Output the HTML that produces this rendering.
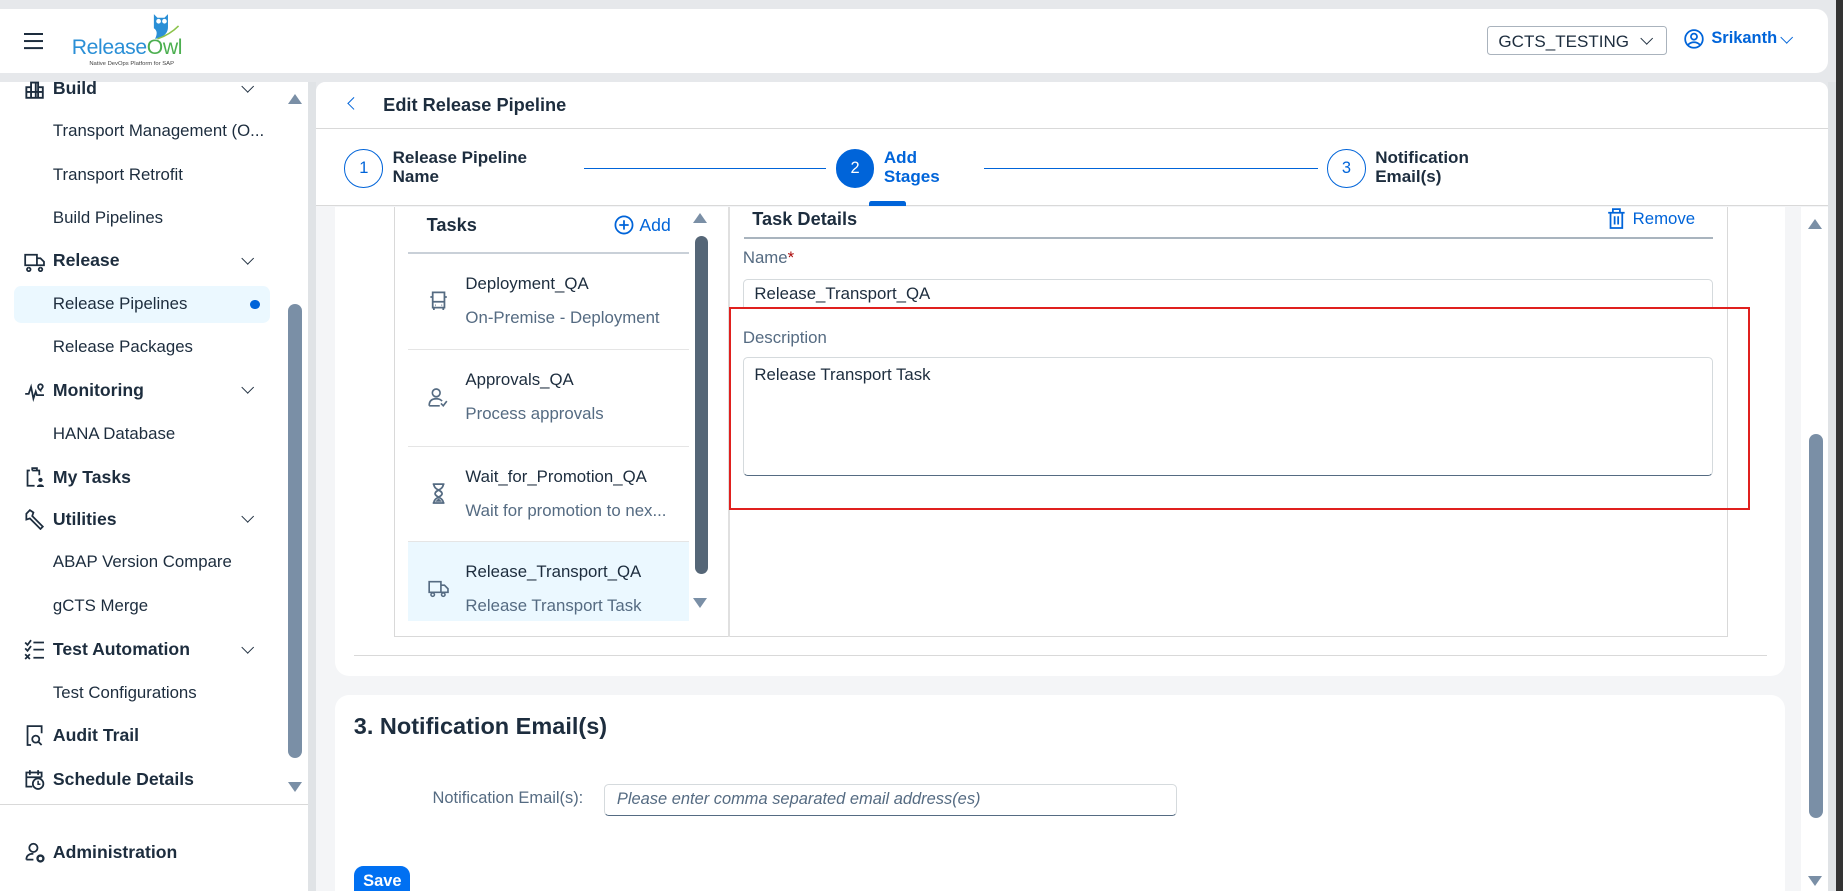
<!DOCTYPE html>
<html><head><meta charset="utf-8">
<style>
*{box-sizing:border-box;margin:0;padding:0}
html,body{width:1843px;height:891px;overflow:hidden}
body{background:#e6e8eb;font-family:"Liberation Sans",sans-serif;color:#1d2d3e}
#w{zoom:1.17538;width:1568px;height:758px;position:relative;overflow:hidden}
.a{position:absolute}
.hdr{left:0;top:8px;width:1555px;height:54px;background:#fff;border-radius:0 10px 10px 0}
.dark{left:1562px;top:0;width:6px;height:758px;background:#333}
.side{left:0;top:70px;width:262px;height:688px;background:#fff}
.nav{position:absolute;left:20px;font-size:15px;font-weight:bold;color:#1d2d3e}
.sub{position:absolute;left:45px;font-size:14.3px;color:#1d2d3e}
.chev{position:absolute;left:207px;width:8px;height:8px;border-right:1.6px solid #1d2d3e;border-bottom:1.6px solid #1d2d3e;transform:rotate(45deg)}
.ic{position:absolute;left:20px;width:18px;height:18px}
.main{left:269px;top:70px;width:1286px;height:688px;background:#f4f5f7;border-radius:8px 8px 0 0}
.card{background:#fff;position:absolute}
.tri-up{width:0;height:0;border-left:6px solid transparent;border-right:6px solid transparent;border-bottom:9px solid #7a8fa6;position:absolute}
.tri-dn{width:0;height:0;border-left:6px solid transparent;border-right:6px solid transparent;border-top:9px solid #7a8fa6;position:absolute}
.item{position:absolute;left:347px;width:239px;border-bottom:1px solid #e5e5e5}
.t1{position:absolute;left:49px;font-size:14.3px;color:#1d2d3e}
.t2{position:absolute;left:49px;font-size:14.3px;color:#556b82}
.stepc{position:absolute;width:33px;height:33px;border-radius:50%;border:1.3px solid #0064d9;color:#0064d9;font-size:14px;text-align:center;line-height:31px}
.stept{position:absolute;font-size:14.5px;font-weight:bold;line-height:16px}
</style></head><body><div id="w">
<div class="a hdr"></div>
<div class="a dark"></div>
<!-- hamburger -->
<div class="a" style="left:20px;top:28px;width:17px;height:2px;background:#1d2d3e;box-shadow:0 6px 0 #1d2d3e,0 12px 0 #1d2d3e"></div>
<!-- logo -->
<svg class="a" style="left:126px;top:11px" width="28" height="24" viewBox="0 0 28 24"><path d="M5 1l3 3h6l3-3v11c0 6-5 9-11 10 2-4 2-7-1-9z" fill="#2a8fd6"/><circle cx="9" cy="7" r="2" fill="#fff"/><circle cx="14" cy="7" r="2" fill="#fff"/><path d="M8 22c6-2 12-5 18-11" stroke="#8bc34a" stroke-width="1.3" fill="none"/></svg>
<div class="a" style="left:61px;top:31px;font-size:18px;color:#2a8fd6;letter-spacing:-0.3px">Release<span style="color:#4caf50">Owl</span></div>
<div class="a" style="left:76px;top:52px;font-size:5px;color:#444">Native DevOps Platform for SAP</div>
<!-- header right -->
<div class="a" style="left:1265px;top:22px;width:153px;height:25px;border:1px solid #aab3bd;border-radius:3px;background:#fff;font-size:14.5px;padding:4px 9px">GCTS_TESTING</div>
<div class="chev" style="left:1397px;top:29px"></div>
<svg class="a" style="left:1433px;top:25px" width="17" height="17" viewBox="0 0 17 17"><circle cx="8.5" cy="8.5" r="7.5" fill="none" stroke="#0064d9" stroke-width="1.5"/><circle cx="8.5" cy="6.5" r="2.6" fill="none" stroke="#0064d9" stroke-width="1.5"/><path d="M3.5 13.5c2.5-3 7.5-3 10 0" fill="none" stroke="#0064d9" stroke-width="1.5"/></svg>
<div class="a" style="left:1456px;top:25px;font-size:14px;font-weight:bold;color:#0064d9">Srikanth</div>
<div class="chev" style="left:1516px;top:28px;border-color:#0064d9"></div>

<!-- sidebar -->
<div class="a side">
<div class="a" style="left:245px;top:189px;width:12px;height:386px;background:#7a8fa6;border-radius:6px"></div>
<div class="tri-up" style="left:245px;top:10px"></div>
<div class="tri-dn" style="left:245px;top:595px"></div>
<div class="a" style="left:12px;top:173px;width:218px;height:32px;background:#ebf8ff;border-radius:6px"></div>
<div class="a" style="left:213px;top:185px;width:8px;height:8px;border-radius:50%;background:#0064d9"></div>
<div class="a" style="left:0;top:614px;width:262px;height:1px;background:#d9d9d9"></div>
<div class="a" style="left:262px;top:0;width:7px;height:688px;background:#e0e3e6"></div>
</div>
<svg class="ic" style="top:67px" viewBox="0 0 18 18"><path d="M2 16V7h4V3h6v4h4v9z M2 11h14 M6 7v9 M10 3v13 M12 7v9" fill="none" stroke="#1d2d3e" stroke-width="1.6"/></svg>
<div class="nav" style="left:45px;top:66px">Build</div><div class="chev" style="top:70px"></div>
<div class="sub" style="top:103px">Transport Management (O...</div>
<div class="sub" style="top:140px">Transport Retrofit</div>
<div class="sub" style="top:177px">Build Pipelines</div>
<svg class="ic" style="top:213px" viewBox="0 0 18 18"><path d="M1 4h10v9H1z M11 7h3l3 3v3h-6 M4 15a1.5 1.5 0 1 0 .1 0 M14 15a1.5 1.5 0 1 0 .1 0" fill="none" stroke="#1d2d3e" stroke-width="1.5"/></svg>
<div class="nav" style="left:45px;top:213px">Release</div><div class="chev" style="top:216px"></div>
<div class="sub" style="top:250px">Release Pipelines</div>
<div class="sub" style="top:287px">Release Packages</div>
<svg class="ic" style="top:324px" viewBox="0 0 18 18"><path d="M1 11h3l2-6 2 10 2-6 1 3h6 M12 5c0-3 4-3 4 0-1 2-2 2.5-2 3-1-1-2-1.5-2-3z" fill="none" stroke="#1d2d3e" stroke-width="1.5"/></svg>
<div class="nav" style="left:45px;top:323px">Monitoring</div><div class="chev" style="top:326px"></div>
<div class="sub" style="top:361px">HANA Database</div>
<svg class="ic" style="top:397px" viewBox="0 0 18 18"><path d="M5 3H3v13h6 M7 3V1h4v2h2v4 M7 3h4" fill="none" stroke="#1d2d3e" stroke-width="1.5"/><circle cx="14" cy="11" r="1.8" fill="#1d2d3e"/><path d="M11 17c0-3 6-3 6 0z" fill="#1d2d3e"/></svg>
<div class="nav" style="left:45px;top:397px">My Tasks</div>
<svg class="ic" style="top:433px" viewBox="0 0 18 18"><path d="M2 4l3-3 3 2-1 3 9 9-2 2-9-9-3 1z" fill="none" stroke="#1d2d3e" stroke-width="1.5"/></svg>
<div class="nav" style="left:45px;top:433px">Utilities</div><div class="chev" style="top:436px"></div>
<div class="sub" style="top:470px">ABAP Version Compare</div>
<div class="sub" style="top:507px">gCTS Merge</div>
<svg class="ic" style="top:544px" viewBox="0 0 18 18"><path d="M1 3l2 2 3-4 M1 8l2 2 3-4 M1 13l4 4 M5 13l-4 4 M8 3h9 M8 9h9 M8 16h9" fill="none" stroke="#1d2d3e" stroke-width="1.5"/></svg>
<div class="nav" style="left:45px;top:544px">Test Automation</div><div class="chev" style="top:547px"></div>
<div class="sub" style="top:581px">Test Configurations</div>
<svg class="ic" style="top:617px" viewBox="0 0 18 18"><path d="M6 17H3V1h12v6" fill="none" stroke="#1d2d3e" stroke-width="1.5"/><circle cx="10" cy="12" r="3" fill="none" stroke="#1d2d3e" stroke-width="1.5"/><path d="M12 14l3 3" stroke="#1d2d3e" stroke-width="1.5"/></svg>
<div class="nav" style="left:45px;top:617px">Audit Trail</div>
<svg class="ic" style="top:654px" viewBox="0 0 18 18"><path d="M7 15H2V3h13v4 M2 7h13 M5 1v4 M12 1v4" fill="none" stroke="#1d2d3e" stroke-width="1.5"/><circle cx="12" cy="12.5" r="4.5" fill="none" stroke="#1d2d3e" stroke-width="1.5"/><path d="M12 10v3h2" fill="none" stroke="#1d2d3e" stroke-width="1.3"/></svg>
<div class="nav" style="left:45px;top:654px">Schedule Details</div>
<svg class="ic" style="top:716px" viewBox="0 0 18 18"><circle cx="8" cy="5" r="3.5" fill="none" stroke="#1d2d3e" stroke-width="1.5"/><path d="M2 15c0-4 3-5 6-5 M2 15h6" fill="none" stroke="#1d2d3e" stroke-width="1.5"/><circle cx="14" cy="14" r="2.5" fill="none" stroke="#1d2d3e" stroke-width="2"/></svg>
<div class="nav" style="left:45px;top:716px">Administration</div>

<!-- main -->
<div class="a main"></div>
<div class="card" style="left:269px;top:70px;width:1286px;height:105px;border-radius:8px 8px 0 0;border-bottom:1px solid #d9d9d9"></div>
<div class="a" style="left:269px;top:109px;width:1286px;height:1px;background:#d9d9d9"></div>
<div class="a" style="left:297px;top:84px;width:8px;height:8px;border-left:1.6px solid #0064d9;border-bottom:1.6px solid #0064d9;transform:rotate(45deg)"></div>
<div class="a" style="left:326px;top:81px;font-size:15.5px;font-weight:bold">Edit Release Pipeline</div>
<!-- stepper -->
<div class="stepc" style="left:293px;top:127px">1</div>
<div class="stept" style="left:334px;top:127px">Release Pipeline<br>Name</div>
<div class="a" style="left:497px;top:143px;width:206px;height:1px;background:#0064d9"></div>
<div class="stepc" style="left:711px;top:127px;background:#0064d9;color:#fff">2</div>
<div class="stept" style="left:752px;top:127px;color:#0064d9">Add<br>Stages</div>
<div class="a" style="left:739px;top:171px;width:32px;height:4px;background:#0064d9;border-radius:2px 2px 0 0"></div>
<div class="a" style="left:837px;top:143px;width:284px;height:1px;background:#0064d9"></div>
<div class="stepc" style="left:1129px;top:127px">3</div>
<div class="stept" style="left:1170px;top:127px">Notification<br>Email(s)</div>

<!-- card 1 -->
<div class="card" style="left:285px;top:176px;width:1234px;height:399px;border-radius:0 0 12px 12px"></div>
<div class="a" style="left:335px;top:176px;width:1135px;height:366px;border:1px solid #d9d9d9;border-top:none"></div>
<div class="a" style="left:619px;top:176px;width:2px;height:366px;background:#e0e0e0"></div>
<div class="a" style="left:301px;top:557px;width:1202px;height:1px;background:#d9d9d9"></div>
<div class="a" style="left:363px;top:183px;font-size:15.5px;font-weight:bold">Tasks</div>
<svg class="a" style="left:522px;top:183px" width="17" height="17" viewBox="0 0 17 17"><circle cx="8.5" cy="8.5" r="7.3" fill="none" stroke="#0064d9" stroke-width="1.5"/><path d="M8.5 4.5v8M4.5 8.5h8" stroke="#0064d9" stroke-width="1.5"/></svg>
<div class="a" style="left:544px;top:183px;font-size:15px;color:#0064d9">Add</div>
<div class="a" style="left:347px;top:214px;width:239px;height:2px;background:#c9d0d8"></div>
<div class="tri-up" style="left:590px;top:181px"></div>
<div class="a" style="left:591px;top:201px;width:11px;height:287px;background:#556677;border-radius:6px"></div>
<div class="tri-dn" style="left:590px;top:509px"></div>

<div class="item" style="top:216px;height:82px"><div class="t1" style="top:17px">Deployment_QA</div><div class="t2" style="top:46px">On-Premise - Deployment</div>
<svg class="a" style="left:17px;top:31px" width="18" height="18" viewBox="0 0 18 18"><path d="M4 2h10v13H4z M2 6h2 M14 6h2 M4 10h10 M6 13h.5 M11.5 13h.5 M5 15v2 M13 15v2" fill="none" stroke="#556b82" stroke-width="1.5"/></svg></div>
<div class="item" style="top:298px;height:82px"><div class="t1" style="top:17px">Approvals_QA</div><div class="t2" style="top:46px">Process approvals</div>
<svg class="a" style="left:17px;top:31px" width="18" height="18" viewBox="0 0 18 18"><circle cx="7" cy="5" r="3.3" fill="none" stroke="#556b82" stroke-width="1.4"/><path d="M1 16c0-5 3-6 6-6s4 1 5 2 M1 16h9 M11 14l2 2 3-4" fill="none" stroke="#556b82" stroke-width="1.4"/></svg></div>
<div class="item" style="top:380px;height:81px"><div class="t1" style="top:17px">Wait_for_Promotion_QA</div><div class="t2" style="top:46px">Wait for promotion to nex...</div>
<svg class="a" style="left:17px;top:31px" width="18" height="18" viewBox="0 0 18 18"><path d="M4 1h10 M4 17h10 M5 1c0 5 7 5 7 8s-7 3-7 8h8c0-5-7-5-7-8s7-3 7-8" fill="none" stroke="#556b82" stroke-width="1.5"/><path d="M6 16l3-3 3 3z" fill="#556b82"/></svg></div>
<div class="item" style="top:461px;height:67px;background:#ebf8ff;border:none"><div class="t1" style="top:17px">Release_Transport_QA</div><div class="t2" style="top:46px">Release Transport Task</div>
<svg class="a" style="left:17px;top:30px" width="18" height="18" viewBox="0 0 18 18"><path d="M1 4h10v9H1z M11 7h3l3 3v3h-6" fill="none" stroke="#556b82" stroke-width="1.4"/><circle cx="4" cy="15" r="1.5" fill="none" stroke="#556b82" stroke-width="1.3"/><circle cx="13" cy="15" r="1.5" fill="none" stroke="#556b82" stroke-width="1.3"/></svg></div>

<!-- details -->
<div class="a" style="left:640px;top:178px;font-size:15.5px;font-weight:bold">Task Details</div>
<svg class="a" style="left:1367px;top:177px" width="16" height="18" viewBox="0 0 16 18"><path d="M1 4h14 M5 4V1h6v3 M3 4v13h10V4 M6.5 7v7 M9.5 7v7" fill="none" stroke="#0064d9" stroke-width="1.5"/></svg>
<div class="a" style="left:1389px;top:178px;font-size:14.3px;color:#0064d9">Remove</div>
<div class="a" style="left:633px;top:202px;width:824px;height:1px;background:#a9b4be"></div>
<div class="a" style="left:632px;top:211px;font-size:14.3px;color:#556b82">Name<span style="color:#aa0808">*</span></div>
<div class="a" style="left:632px;top:237px;width:825px;height:26px;border:1px solid #d5dadd;border-bottom:none;border-radius:4px 4px 0 0;font-size:14.3px;padding:4px 9px">Release_Transport_QA</div>
<div class="a" style="left:632px;top:279px;font-size:14.3px;color:#556b82">Description</div>
<div class="a" style="left:632px;top:304px;width:825px;height:101px;border:1px solid #d5dadd;border-bottom:1.5px solid #556b82;border-radius:4px;font-size:14.3px;padding:6px 9px">Release Transport Task</div>
<div class="a" style="left:620px;top:261px;width:869px;height:173px;border:2.5px solid #e0201e"></div>

<!-- card 2 -->
<div class="card" style="left:285px;top:591px;width:1234px;height:167px;border-radius:12px 12px 0 0"></div>
<div class="a" style="left:301px;top:607px;font-size:20px;font-weight:bold">3. Notification Email(s)</div>
<div class="a" style="left:368px;top:671px;font-size:14px;color:#556b82">Notification Email(s):</div>
<div class="a" style="left:514px;top:667px;width:487px;height:27px;border:1px solid #d5dadd;border-bottom:1.5px solid #556b82;border-radius:4px;background:#fff;font-size:14px;font-style:italic;color:#556b82;padding:4px 10px">Please enter comma separated email address(es)</div>
<div class="a" style="left:301px;top:737px;width:48px;height:30px;background:#0070f2;border-radius:8px;color:#fff;font-weight:bold;font-size:14px;padding:5px 8px">Save</div>

<!-- main scrollbar -->
<div class="a" style="left:1532px;top:176px;width:23px;height:582px;background:#fff"></div>
<div class="tri-up" style="left:1538px;top:186px"></div>
<div class="a" style="left:1539px;top:369px;width:12px;height:327px;background:#7a8fa6;border-radius:6px"></div>
<div class="tri-dn" style="left:1538px;top:745px"></div>
<div class="a" style="left:1555px;top:70px;width:7px;height:688px;background:#e0e3e6"></div>
</div></body></html>
